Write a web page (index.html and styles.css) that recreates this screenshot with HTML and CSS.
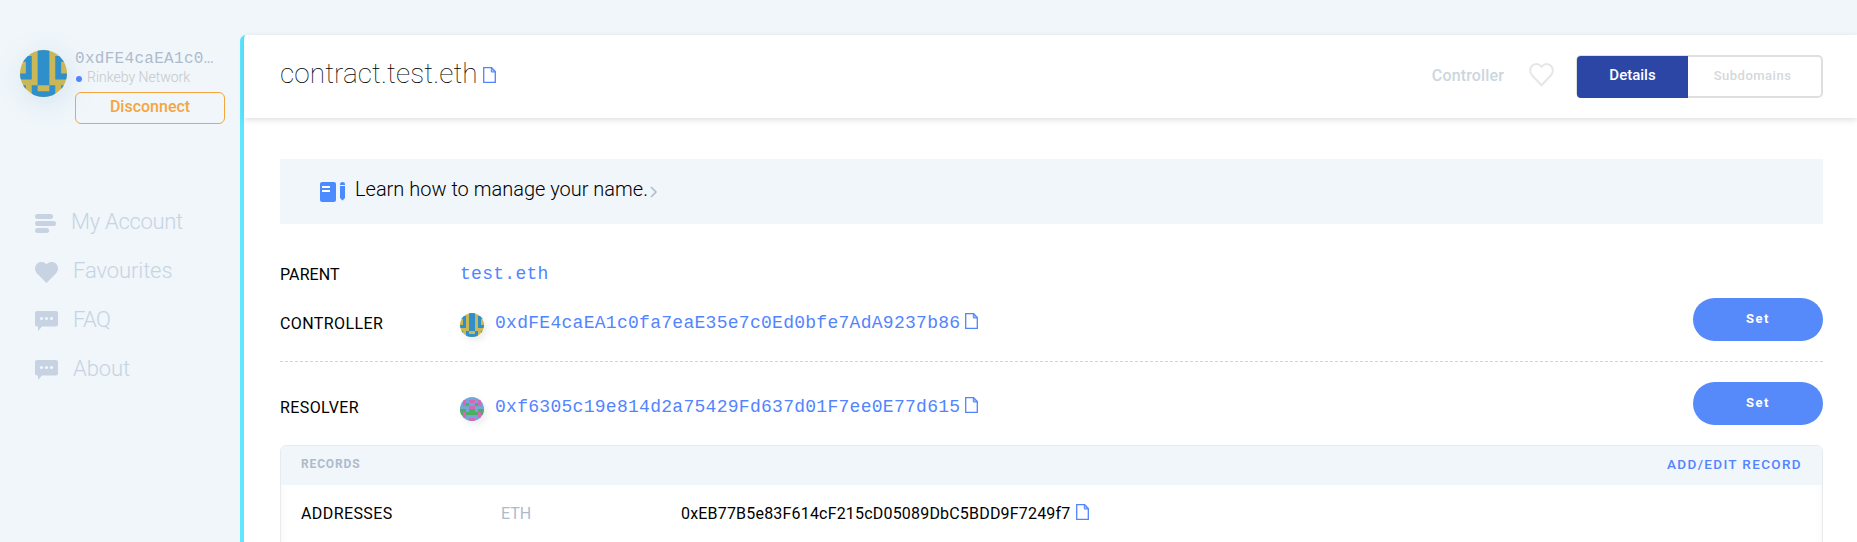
FILE: index.html
```html
<!DOCTYPE html>
<html lang="en">
<head>
<meta charset="utf-8">
<title>contract.test.eth</title>
<link rel="stylesheet" href="styles.css">
</head>
<body>
<svg class="defs" width="0" height="0">
  <symbol id="file" viewBox="0 0 13 16"><path d="M.7.7H8.6L12.3 4.6V15.3H.7Z" fill="none" stroke="#5284ff" stroke-width="1.3"/><path d="M8.3.7V5H12.3Z" fill="#a9c3ff" stroke="#5284ff" stroke-width="1"/></symbol>
  <symbol id="chat" viewBox="0 0 23 20"><path d="M2 0H21Q23 0 23 2V13.500Q23 15.500 21 15.500H7L3 20V15.500H2Q0 15.500 0 13.500V2Q0 0 2 0Z" fill="#c7d3e3"/><g fill="#f0f6fa"><circle cx="6.500" cy="7.500" r="1.600"/><circle cx="11.500" cy="7.500" r="1.600"/><circle cx="16.500" cy="7.500" r="1.600"/></g></symbol>
  <symbol id="ident" viewBox="0 0 8 8"><path fill="#c9b758" d="M0 0H8V8H0Z"/><path fill="#2f8fcb" d="M3 0H5V6H3ZM0 1H2V5H0V4H1V2H0ZM8 1H6V5H8V4H7V2H8ZM0 6H1V8H0ZM7 6H8V8H7ZM2 6H3V7H5V6H6V8H2Z"/></symbol>
</svg>
<div class="app">
  <aside class="side">
    <div class="account">
      <svg class="avatar" width="47" height="47"><use href="#ident"/></svg>
      <div class="who">
        <div class="addr t">0xdFE4caEA1c0…</div>
        <div class="net"><i class="dot"></i><span class="t">Rinkeby Network</span></div>
        <div class="disc">Disconnect</div>
      </div>
    </div>
    <nav class="nav">
      <a class="item first"><svg width="23" height="19" viewBox="0 0 23 19" fill="#c7d3e3"><rect width="18" height="5" rx="2.500"/><rect y="7" width="21" height="5" rx="2.500"/><rect y="14" width="14" height="5" rx="2.500"/></svg><span class="t">My Account</span></a>
      <a class="item"><svg width="23" height="21" viewBox="0 0 23 21"><path fill="#c7d3e3" d="M11.500 21L1.800 11.200C-.6 8.600-.6 4.500 1.800 1.900C4.300-.6 8.600-.6 11 1.900L11.500 2.500L12 1.900C14.500-.6 18.700-.6 21.200 1.900C23.600 4.500 23.600 8.600 21.200 11.200Z"/></svg><span class="t">Favourites</span></a>
      <a class="item faq"><svg width="23" height="20"><use href="#chat"/></svg><span class="t">FAQ</span></a>
      <a class="item"><svg width="23" height="20"><use href="#chat"/></svg><span class="t">About</span></a>
    </nav>
  </aside>
  <main class="main">
    <header class="head">
      <h1 class="title t">contract.test.eth</h1>
      <svg class="file" width="13" height="16"><use href="#file"/></svg>
      <span class="role t">Controller</span>
      <svg class="heart" width="25" height="25" viewBox="0 0 25 25"><path d="M12.500 23.200L3 13.200C.6 10.600.6 6.600 2.900 4C5.200 1.300 9 1.200 11.300 3.600L12.500 4.900L13.700 3.600C16 1.200 19.800 1.300 22.100 4C24.400 6.600 24.400 10.600 22 13.200Z" fill="none" stroke="#e6e6e6" stroke-width="2"/></svg>
      <div class="tabs"><span class="tab on">Details</span><span class="tab">Subdomains</span></div>
    </header>
    <div class="content">
      <div class="learn">
        <svg class="book" width="26" height="21" viewBox="0 0 26 21"><path fill="#4c8bff" d="M2 0H14Q16 0 16 2V18Q16 20 14 20H2Q0 20 0 18V2Q0 0 2 0ZM20 3V2Q20 0 22.500 0T25 2V3ZM20 4H25V16L22.500 18.500L20 16Z"/><path fill="#fff" d="M2 4H10V6H2ZM2 8H10V10H2Z"/></svg>
        <span class="t">Learn how to manage your name.</span>
        <svg class="chev" width="8" height="12" viewBox="0 0 8 12"><path d="M1 1L6 6L1 11" fill="none" stroke="#adbbcd" stroke-width="1.500"/></svg>
      </div>
      <div class="row parent"><span class="label parent-label">PARENT</span><span class="mono t">test.eth</span></div>
      <div class="row ctrl"><span class="label">CONTROLLER</span><svg class="mini" width="24" height="24"><use href="#ident"/></svg><span class="mono t">0xdFE4caEA1c0fa7eaE35e7c0Ed0bfe7AdA9237b86</span><svg class="file" width="13" height="16"><use href="#file"/></svg><span class="set">Set</span></div>
      <div class="row res"><span class="label">RESOLVER</span><svg class="mini" width="24" height="24" viewBox="0 0 8 8"><path fill="#72a8d8" d="M0 0H8V8H0Z"/><path fill="#d867b8" d="M1 1H2V3H1ZM6 1H7V3H6ZM3 1H5V2H3ZM3 3H5V4H3ZM1 5H2V7H1ZM6 5H7V7H6ZM3 7H5V8H3Z"/><path fill="#4bae62" d="M2 2H3V3H2ZM5 2H6V3H5ZM0 4H2V5H0ZM6 4H8V5H6ZM3 4H5V6H3ZM2 5H3V6H2ZM5 5H6V6H5ZM0 5H1V6H0ZM7 5H8V6H7Z"/></svg><span class="mono t">0xf6305c19e814d2a75429Fd637d01F7ee0E77d615</span><svg class="file" width="13" height="16"><use href="#file"/></svg><span class="set">Set</span></div>
      <section class="records">
        <div class="rhead"><span class="rt">RECORDS</span><span class="ra">ADD/EDIT RECORD</span></div>
        <div class="rrow"><span class="rl">ADDRESSES</span><span class="coin">ETH</span><span class="val t">0xEB77B5e83F614cF215cD05089DbC5BDD9F7249f7</span><svg class="file" width="13" height="16"><use href="#file"/></svg></div>
      </section>
    </div>
  </main>
</div>
</body>
</html>
```
FILE: styles.css
```css
* { box-sizing: border-box; }
body { margin: 0; background: #f0f6fa; font-family: Roboto, "Liberation Sans", sans-serif; }
.defs { position: absolute; }
.app { display: flex; width: 100%; height: 542px; overflow: hidden; }
.t { white-space: nowrap; }
.side { width: 240px; flex: none; padding: 47px 0 0 20px; }
.account { display: flex; gap: 8px; }
.avatar { flex: none; margin-top: 3px; border-radius: 50%; box-shadow: 3px 5px 20px 3px rgba(180, 205, 230, .35); }
.who { width: 150px; }
.addr { height: 22px; padding-top: 1px; font: 16px/22px "Liberation Mono", monospace; letter-spacing: .3px; color: #adbbcd; }
.net { display: flex; align-items: center; height: 16px; font-size: 14px; font-weight: 300; line-height: 16px; color: #c4c8ca; }
.dot { width: 6px; height: 6px; margin: 3px 5px 0 1px; border-radius: 50%; background: #5284ff; }
.disc { height: 32px; margin-top: 7px; border: 1px solid #f5a540; border-radius: 6px; text-align: center; font-size: 16px; font-weight: 500; line-height: 28px; color: #f5a540; }
.nav { display: flex; flex-direction: column; padding: 73px 0 0 15px; }
.item { display: flex; align-items: center; gap: 15px; height: 49px; font-size: 22px; font-weight: 300; letter-spacing: -.1px; color: #c7d3e3; }
.item svg { margin-top: 3px; }
.item.first { gap: 13px; letter-spacing: -.3px; }
.item.faq { letter-spacing: -.6px; }
.main { flex: 1; margin-top: 35px; border-left: 4px solid #5ee7ff; border-radius: 6px 0 0 0; background: #fff; }
.head { display: flex; align-items: center; height: 83px; padding: 0 34px 0 36px; box-shadow: 0 2px 6px rgba(0, 0, 0, .13); }
.title { margin: -6px 5px 0 0; font-size: 28px; font-weight: 100; letter-spacing: .07px; color: #000; }
.file { flex: none; }
.head .file { margin-top: -3px; }
.role { margin: -2px 0 0 auto; font-size: 16px; font-weight: 500; letter-spacing: .15px; color: #ccd6de; }
.heart { margin: -4px 22px 0 25px; }
.tabs { display: flex; width: 247px; height: 43px; border: 2px solid #dfdfdf; border-radius: 5px; }
.tab { flex: 1; text-align: center; font-size: 13px; font-weight: 500; letter-spacing: .5px; line-height: 38px; color: #d5d8da; padding-right: 4px; }
.tab.on { flex: none; width: 111px; height: 42px; margin: -1px 0 0 -1px; padding: 0; border-radius: 4px 0 0 4px; background: #2c46a6; color: #fff; font-size: 15px; letter-spacing: 0; line-height: 39px; }
.content { padding: 41px 34px 0 36px; }
.learn { display: flex; align-items: center; height: 65px; padding-left: 40px; background: #f0f6fa; font-size: 20px; font-weight: 300; letter-spacing: 0; color: #000; }
.book { margin-top: 2px; }
.learn .t { margin: -5px 0 0 9px; }
.chev { margin: 1px 0 0 2px; }
.row { display: flex; align-items: center; }
.label { width: 180px; font-size: 16px; letter-spacing: .4px; }
.parent-label { letter-spacing: .1px; }
.mono { font: 18px/22px "Liberation Mono", monospace; letter-spacing: .28px; color: #5284ff; }
.parent { margin-top: 25px; height: 49px; padding-top: 1px; }
.ctrl { height: 64px; padding-bottom: 13px; border-bottom: 1px dashed #d3d3d3; }
.res { height: 83px; padding: 20px 0 13px; }
.mini { border-radius: 50%; margin: 4px 11px 0 0; flex: none; box-shadow: 3px 4px 6px rgba(143, 143, 143, .15); }
.row .file { margin: -4px 0 0 5px; }
.set { width: 130px; height: 43px; margin: -7px 0 0 auto; border-radius: 22px; background: #5689fa; color: #fff; text-align: center; font-size: 13px; font-weight: 700; letter-spacing: 1.5px; line-height: 41px; }
.records { height: 200px; border: 1px solid #e8ebee; border-radius: 6px; overflow: hidden; box-shadow: inset 0 0 10px rgba(0, 0, 0, .04); }
.rhead { display: flex; align-items: center; justify-content: space-between; height: 39px; padding: 0 20px 3px; background: #f0f6fa; }
.rt { font-size: 12px; font-weight: 700; letter-spacing: .85px; color: #adbbcd; }
.ra { margin: -1px 0 0; font-size: 13.5px; font-weight: 500; letter-spacing: 1.35px; color: #5284ff; }
.rrow { display: flex; align-items: center; height: 58px; padding: 0 0 2px 20px; font-size: 16px; }
.rl { width: 200px; letter-spacing: .4px; }
.coin { width: 180px; color: #adbbcd; }
.val { letter-spacing: .19px; }
.rrow .file { margin: -2px 0 0 6px; }
```
